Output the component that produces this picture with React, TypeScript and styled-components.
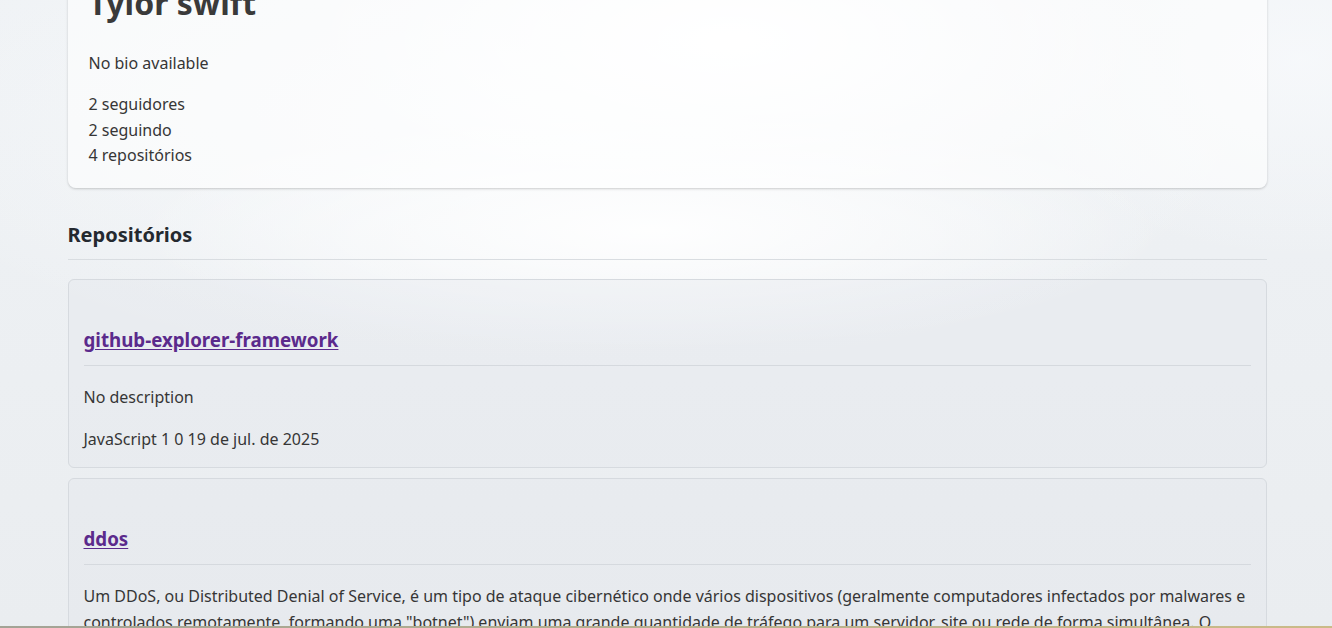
import React from "react";
import styled, { createGlobalStyle } from "styled-components";

const GlobalStyle = createGlobalStyle`
  html, body {
    margin: 0;
    padding: 0;
  }
  body {
    font-family: "Noto Sans", "Open Sans", sans-serif;
    color: #363636;
    min-height: 100vh;
    background-color: #edf0f3;
    background-image:
      radial-gradient(ellipse 420px 160px at 730px 40px, rgba(255,255,255,0.95), rgba(255,255,255,0) 100%),
      radial-gradient(ellipse 520px 120px at 650px 230px, rgba(255,255,255,0.9), rgba(255,255,255,0) 100%),
      radial-gradient(ellipse 700px 260px at 560px 120px, rgba(250,252,253,0.9), rgba(250,252,253,0) 100%),
      radial-gradient(ellipse 300px 200px at 1300px 60px, rgba(248,250,252,0.8), rgba(248,250,252,0) 100%),
      linear-gradient(180deg, #eff2f5 0%, #eaedf0 100%);
    background-attachment: fixed;
  }
`;

const Page = styled.main`
  max-width: 1199px;
  margin: -16px auto 0;
  padding: 0 0 40px;
  box-sizing: border-box;
  position: relative;
  left: 1px;
`;

const ProfileCard = styled.section`
  background: rgba(255, 255, 255, 0.55);
  border-radius: 8px;
  box-shadow: 0 1px 3px rgba(0, 0, 0, 0.14), 0 1px 2px rgba(0, 0, 0, 0.06);
  padding: 0 20px 19px 21px;
`;

const Name = styled.h1`
  margin: 0 0 29px;
  font-size: 32px;
  line-height: 1.2;
  font-weight: 700;
  color: #3a3a3a;
`;

const Bio = styled.p`
  margin: 0 0 15px;
  font-size: 16px;
  line-height: 1.6;
`;

const Stat = styled.div`
  font-size: 16px;
  line-height: 1.6;
`;

const SectionTitle = styled.h2`
  margin: 32px 0 19px;
  padding-bottom: 9px;
  font-size: 20px;
  line-height: 1.5;
  font-weight: 700;
  color: #24292f;
  border-bottom: 1px solid #d9dde1;
`;

const RepoList = styled.div`
  display: flex;
  flex-direction: column;
  gap: 10px;
`;

const RepoCard = styled.article`
  border: 1px solid #d6dadf;
  border-radius: 6px;
  background: rgba(225, 229, 234, 0.3);
  padding: 16px 15px 14px 15px;
`;

const RepoName = styled.h3`
  margin: 30px 0 0;
  padding-bottom: 11px;
  font-size: 18.72px;
  line-height: 28px;
  font-weight: 700;
  border-bottom: 1px solid #d5d9de;
`;

const RepoLink = styled.a`
  color: #5b2a8c;
  text-decoration: underline;
  text-underline-offset: 2px;
`;

const Description = styled.p`
  margin: 19px 0 17px;
  font-size: 16px;
  line-height: 1.6;
  color: #363636;
`;

const Meta = styled.p`
  margin: 0;
  font-size: 16px;
  line-height: 1.6;
  color: #363636;
`;

const BottomBar = styled.div`
  position: fixed;
  left: 0;
  right: 0;
  bottom: 0;
  height: 2px;
  background: linear-gradient(90deg, #a3a396 0%, #b5b08f 50%, #cbbb88 100%);
`;

type Repo = {
  name: string;
  description: string;
  language: string;
  stars: number;
  forks: number;
  updated: string;
};

const repos: Repo[] = [
  {
    name: "github-explorer-framework",
    description: "No description",
    language: "JavaScript",
    stars: 1,
    forks: 0,
    updated: "19 de jul. de 2025",
  },
  {
    name: "ddos",
    description:
      'Um DDoS, ou Distributed Denial of Service, é um tipo de ataque cibernético onde vários dispositivos (geralmente computadores infectados por malwares e controlados remotamente, formando uma "botnet") enviam uma grande quantidade de tráfego para um servidor, site ou rede de forma simultânea. O objetivo é sobrecarregar o alvo, tornando-o lento ou indisponível para usuários legítimos.',
    language: "Python",
    stars: 1,
    forks: 0,
    updated: "12 de jul. de 2025",
  },
];

export default function App() {
  return (
    <>
      <GlobalStyle />
      <Page>
        <ProfileCard>
          <Name>Tylor swift</Name>
          <Bio>No bio available</Bio>
          <Stat>2 seguidores</Stat>
          <Stat>2 seguindo</Stat>
          <Stat>4 repositórios</Stat>
        </ProfileCard>
        <SectionTitle>Repositórios</SectionTitle>
        <RepoList>
          {repos.map((r) => (
            <RepoCard key={r.name}>
              <RepoName>
                <RepoLink href="#">{r.name}</RepoLink>
              </RepoName>
              <Description>{r.description}</Description>
              <Meta>
                {r.language} {r.stars} {r.forks} {r.updated}
              </Meta>
            </RepoCard>
          ))}
        </RepoList>
      </Page>
      <BottomBar />
    </>
  );
}
